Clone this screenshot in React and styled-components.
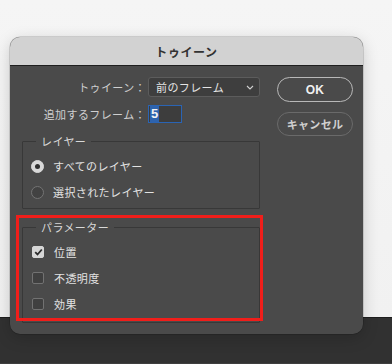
import styled, { createGlobalStyle } from "styled-components";

const GlobalStyle = createGlobalStyle`
  html, body {
    margin: 0;
    padding: 0;
    background: #f3f3f3;
  }
  body {
    font-family: "Noto Sans CJK JP", "Noto Sans", sans-serif;
  }
`;

const Page = styled.div`
  position: relative;
  width: 392px;
  height: 364px;
  display: flex;
  flex-direction: column;
  overflow: hidden;
`;

const Backdrop = styled.div`
  height: 317px;
  background: linear-gradient(#f5f5f5, #f1f1f1);
`;

const Footer = styled.div`
  flex: 1;
  background: #313131;
  border-top: 1px solid #1e1e1e;
  border-bottom: 1px solid #3e3e3e;
`;

const Dialog = styled.div`
  position: absolute;
  top: 37px;
  left: 10px;
  width: 353px;
  height: 297px;
  border-radius: 10px;
  background: #4a4a4a;
  box-shadow: 0 0 0 0.5px rgba(0, 0, 0, 0.25), 0 4px 16px rgba(0, 0, 0, 0.18);
  overflow: hidden;
`;

const TitleBar = styled.div`
  height: 28px;
  background: #d2d2d2;
  border-bottom: 1px solid #1f1f1f;
  display: flex;
  align-items: center;
  justify-content: center;
  font-size: 12px;
  font-weight: 700;
  color: #333;
  letter-spacing: 0.6px;
`;

const Body = styled.div`
  position: relative;
  display: flex;
  gap: 17px;
  padding: 11px 10px 0 12px;
`;

const LeftColumn = styled.div`
  width: 238px;
  display: flex;
  flex-direction: column;
`;

const RightColumn = styled.div`
  width: 76px;
  display: flex;
  flex-direction: column;
  gap: 10px;
`;

const FieldRow = styled.div`
  display: flex;
  align-items: center;
  height: ${(p) => p.$h}px;
  margin-bottom: ${(p) => p.$mb || 0}px;
`;

const Label = styled.div`
  width: 124px;
  margin-right: 2px;
  text-align: right;
  font-size: 11px;
  color: #cfcfcf;
  letter-spacing: 0.4px;
  white-space: nowrap;
`;

const Select = styled.div`
  box-sizing: border-box;
  width: 112px;
  height: 20px;
  border: 1px solid #5c5c5c;
  border-radius: 3px;
  background: #3e3e3e;
  display: flex;
  align-items: center;
  justify-content: space-between;
  padding: 0 5px 0 7px;
  font-size: 11px;
  color: #e4e4e4;
  letter-spacing: 0.4px;
`;

const NumberBox = styled.div`
  box-sizing: border-box;
  width: 34px;
  height: 18px;
  border: 1px solid #2a64b4;
  background: #3d3d3d;
  display: flex;
  align-items: center;
  padding-left: 1px;
`;

const Selected = styled.span`
  background: #2e63ad;
  color: #f2f2f2;
  font-family: "Liberation Sans", sans-serif;
  font-weight: 700;
  font-size: 13px;
  line-height: 16px;
  padding: 0 1px;
`;

const Group = styled.fieldset`
  margin: 12px 0 0;
  padding: 6px 0 ${(p) => p.$pb}px;
  border: 1px solid #383838;
  border-radius: 1px;
  min-width: 0;
`;

const Legend = styled.legend`
  margin-left: 13px;
  padding: 0 5px;
  font-size: 11px;
  line-height: 12px;
  color: #d8d8d8;
  letter-spacing: 0.4px;
`;

const Option = styled.div`
  height: 26px;
  display: flex;
  align-items: center;
  padding-left: 8px;
  gap: 9px;
  font-size: 11px;
  color: #e2e2e2;
  letter-spacing: 0.4px;
`;

const Radio = styled.span`
  box-sizing: border-box;
  width: 13px;
  height: 13px;
  border-radius: 50%;
  display: flex;
  align-items: center;
  justify-content: center;
  background: ${(p) => (p.$on ? "#d9d9d9" : "#424242")};
  border: 1px solid ${(p) => (p.$on ? "#d9d9d9" : "#747474")};
  &::after {
    content: "";
    display: ${(p) => (p.$on ? "block" : "none")};
    width: 5px;
    height: 5px;
    border-radius: 50%;
    background: #2f2f2f;
  }
`;

const Check = styled.span`
  box-sizing: border-box;
  width: 12px;
  height: 12px;
  margin-left: 1px;
  margin-right: 1px;
  border-radius: 2px;
  display: flex;
  align-items: center;
  justify-content: center;
  background: ${(p) => (p.$on ? "#d6d6d6" : "#404040")};
  border: 1px solid ${(p) => (p.$on ? "#d6d6d6" : "#727272")};
`;

const Button = styled.div`
  box-sizing: border-box;
  height: ${(p) => (p.$primary ? 25 : 24)}px;
  border-radius: 13px;
  border: ${(p) => (p.$primary ? "1.5px solid #b8b8b8" : "1px solid #6a6a6a")};
  display: flex;
  align-items: center;
  justify-content: center;
  font-size: ${(p) => (p.$primary ? 12 : 11)}px;
  font-weight: 700;
  color: ${(p) => (p.$primary ? "#f0f0f0" : "#d0d0d0")};
  font-family: ${(p) =>
    p.$primary ? '"Liberation Sans", sans-serif' : '"Noto Sans CJK JP", sans-serif'};
  letter-spacing: 0.3px;
`;

const Highlight = styled.div`
  position: absolute;
  left: 6px;
  top: 149px;
  width: 247px;
  height: 106px;
  box-sizing: border-box;
  border: 3px solid #f01e1a;
  pointer-events: none;
`;

const Chevron = () => (
  <svg width="8" height="5" viewBox="0 0 8 5">
    <path d="M1 1l3 3 3-3" fill="none" stroke="#cfcfcf" strokeWidth="1.1" />
  </svg>
);

const Tick = () => (
  <svg width="9" height="8" viewBox="0 0 9 8">
    <path d="M1.2 4.2l2.3 2.3L7.8 1.5" fill="none" stroke="#2b2b2b" strokeWidth="1.8" />
  </svg>
);

const layers = [
  { id: "all", text: "すべてのレイヤー", on: true },
  { id: "sel", text: "選択されたレイヤー", on: false },
];

const params = [
  { id: "pos", text: "位置", on: true },
  { id: "opa", text: "不透明度", on: false },
  { id: "fx", text: "効果", on: false },
];

export default function App() {
  return (
    <>
      <GlobalStyle />
      <Page>
        <Backdrop />
        <Footer />
        <Dialog>
          <TitleBar>トゥイーン</TitleBar>
          <Body>
            <LeftColumn>
              <FieldRow $h={20} $mb={8}>
                <Label>トゥイーン：</Label>
                <Select>
                  <span>前のフレーム</span>
                  <Chevron />
                </Select>
              </FieldRow>
              <FieldRow $h={18}>
                <Label>追加するフレーム：</Label>
                <NumberBox>
                  <Selected>5</Selected>
                </NumberBox>
              </FieldRow>
              <Group $pb={3}>
                <Legend>レイヤー</Legend>
                {layers.map(({ id, text, on }) => (
                  <Option key={id}>
                    <Radio $on={on} />
                    {text}
                  </Option>
                ))}
              </Group>
              <Group $pb={5}>
                <Legend>パラメーター</Legend>
                {params.map(({ id, text, on }) => (
                  <Option key={id}>
                    <Check $on={on}>{on && <Tick />}</Check>
                    {text}
                  </Option>
                ))}
              </Group>
            </LeftColumn>
            <RightColumn>
              <Button $primary>OK</Button>
              <Button>キャンセル</Button>
            </RightColumn>
            <Highlight />
          </Body>
        </Dialog>
      </Page>
    </>
  );
}
